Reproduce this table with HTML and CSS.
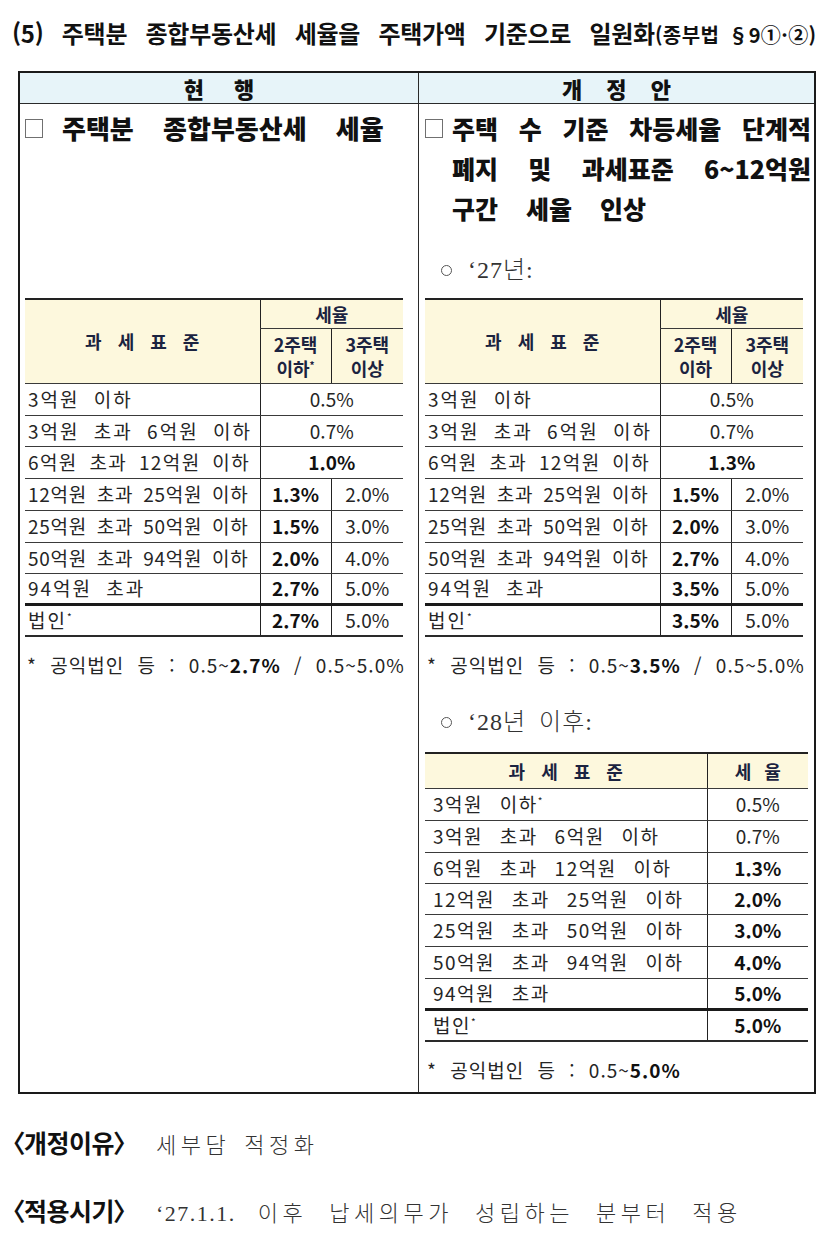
FILE: index.html
```html
<!DOCTYPE html>
<html lang="ko">
<head>
<meta charset="utf-8">
<title>주택분 종합부동산세 세율</title>
<link rel="stylesheet" href="styles.css">
</head>
<body>
<div class="page">
  <h1 class="title">(5) 주택분 종합부동산세 세율을 주택가액 기준으로 일원화<span class="title-ref">(종부법 §9①·②)</span></h1>

  <div class="cmp">
    <div class="cmp-head">
      <div class="hcell hcell-l">현 행</div>
      <div class="hcell hcell-r">개 정 안</div>
    </div>
    <div class="cmp-body">
      <div class="col col-l">
        <div class="intro">
          <div class="hd hd-l">
            <span class="cb"></span>
            <div class="hd-text"><span class="ln last">주택분 종합부동산세 세율</span></div>
          </div>
        </div>
        <table class="rt rt3">
          <colgroup><col class="c1"><col class="c2"><col class="c3"></colgroup>
          <tr class="h1"><th rowspan="2" class="spread">과 세 표 준</th><th colspan="2">세율</th></tr>
          <tr class="h2"><th>2주택<br>이하<sup>*</sup></th><th>3주택<br>이상</th></tr>
          <tr class="r32"><td class="lbl">3억원 이하</td><td colspan="2">0.5%</td></tr>
          <tr class="r31"><td class="lbl">3억원 초과 6억원 이하</td><td colspan="2">0.7%</td></tr>
          <tr class="r32"><td class="lbl mid">6억원 초과 12억원 이하</td><td colspan="2"><b>1.0%</b></td></tr>
          <tr class="r32"><td class="lbl tight">12억원 초과 25억원 이하</td><td><b>1.3%</b></td><td>2.0%</td></tr>
          <tr class="r32"><td class="lbl tight">25억원 초과 50억원 이하</td><td><b>1.5%</b></td><td>3.0%</td></tr>
          <tr class="r31"><td class="lbl tight">50억원 초과 94억원 이하</td><td><b>2.0%</b></td><td>4.0%</td></tr>
          <tr class="r31 before-corp"><td class="lbl">94억원 초과</td><td><b>2.7%</b></td><td>5.0%</td></tr>
          <tr class="r32 corp"><td class="lbl">법인<sup>*</sup></td><td><b>2.7%</b></td><td>5.0%</td></tr>
        </table>
        <p class="note">* 공익법인 등 : 0.5~<b>2.7%</b> / 0.5~5.0%</p>
      </div>

      <div class="col col-r">
        <div class="intro">
          <div class="hd hd-r">
            <span class="cb"></span>
            <div class="hd-text">
              <span class="ln">주택 수 기준 차등세율 단계적</span>
              <span class="ln">폐지 및 과세표준 6~12억원</span>
              <span class="ln last">구간 세율 인상</span>
            </div>
          </div>
          <p class="sub"><span class="bullet"></span>‘27년:</p>
        </div>
        <table class="rt rt3">
          <colgroup><col class="c1"><col class="c2"><col class="c3"></colgroup>
          <tr class="h1"><th rowspan="2" class="spread">과 세 표 준</th><th colspan="2">세율</th></tr>
          <tr class="h2"><th>2주택<br>이하</th><th>3주택<br>이상</th></tr>
          <tr class="r32"><td class="lbl">3억원 이하</td><td colspan="2">0.5%</td></tr>
          <tr class="r31"><td class="lbl">3억원 초과 6억원 이하</td><td colspan="2">0.7%</td></tr>
          <tr class="r32"><td class="lbl mid">6억원 초과 12억원 이하</td><td colspan="2"><b>1.3%</b></td></tr>
          <tr class="r32"><td class="lbl tight">12억원 초과 25억원 이하</td><td><b>1.5%</b></td><td>2.0%</td></tr>
          <tr class="r32"><td class="lbl tight">25억원 초과 50억원 이하</td><td><b>2.0%</b></td><td>3.0%</td></tr>
          <tr class="r31"><td class="lbl tight">50억원 초과 94억원 이하</td><td><b>2.7%</b></td><td>4.0%</td></tr>
          <tr class="r31 before-corp"><td class="lbl">94억원 초과</td><td><b>3.5%</b></td><td>5.0%</td></tr>
          <tr class="r32 corp"><td class="lbl">법인<sup>*</sup></td><td><b>3.5%</b></td><td>5.0%</td></tr>
        </table>
        <p class="note">* 공익법인 등 : 0.5~<b>3.5%</b> / 0.5~5.0%</p>

        <p class="sub sub2"><span class="bullet"></span>‘28년 이후:</p>
        <table class="rt rt2">
          <colgroup><col class="d1"><col class="d2"></colgroup>
          <tr class="h0"><th class="spread">과 세 표 준</th><th class="spread2">세 율</th></tr>
          <tr class="r32"><td class="lbl wide">3억원 이하<sup>*</sup></td><td>0.5%</td></tr>
          <tr class="r32"><td class="lbl wide">3억원 초과 6억원 이하</td><td>0.7%</td></tr>
          <tr class="r31"><td class="lbl wide">6억원 초과 12억원 이하</td><td><b>1.3%</b></td></tr>
          <tr class="r31"><td class="lbl wide">12억원 초과 25억원 이하</td><td><b>2.0%</b></td></tr>
          <tr class="r32"><td class="lbl wide">25억원 초과 50억원 이하</td><td><b>3.0%</b></td></tr>
          <tr class="r32"><td class="lbl wide">50억원 초과 94억원 이하</td><td><b>4.0%</b></td></tr>
          <tr class="r31 before-corp"><td class="lbl wide">94억원 초과</td><td><b>5.0%</b></td></tr>
          <tr class="r32 corp"><td class="lbl wide">법인<sup>*</sup></td><td><b>5.0%</b></td></tr>
        </table>
        <p class="note note2">* 공익법인 등 : 0.5~<b>5.0%</b></p>
      </div>
    </div>
  </div>

  <p class="foot"><span class="flabel">〈개정이유〉</span><span class="ftext">세부담 적정화</span></p>
  <p class="foot foot2"><span class="flabel">〈적용시기〉</span><span class="ftext"><span class="date">‘27.1.1.</span> 이후 납세의무가 성립하는 분부터 적용</span></p>
</div>
</body>
</html>
```

FILE: styles.css
```css
html, body {
  margin: 0;
  padding: 0;
  background: #ffffff;
}

body {
  font-family: "Noto Sans CJK KR", "Noto Sans", sans-serif;
  color: #151515;
  width: 827px;
}

.page {
  padding: 18px 0 0 0;
}

.title {
  margin: 0 0 23px 12px;
  height: 30px;
  line-height: 30px;
  font-size: 24px;
  font-weight: 700;
  letter-spacing: -0.3px;
  word-spacing: 12px;
  white-space: nowrap;
  color: #111;
}

.title-ref {
  font-size: 20px;
  font-weight: 700;
  word-spacing: 3px;
  letter-spacing: 0.4px;
}

/* outer comparison table */
.cmp {
  margin-left: 18px;
  width: 798px;
  box-sizing: border-box;
  border: 2px solid #1a1a1a;
}

.cmp-head {
  display: grid;
  grid-template-columns: 398px 1fr;
  height: 30px;
  background: #e7f4f9;
  border-bottom: 1px solid #2a2a2a;
}

.hcell {
  text-align: center;
  line-height: 30px;
  font-size: 22px;
  font-weight: 900;
  color: #111;
}

.hcell-l {
  letter-spacing: 12px;
  padding-left: 12px;
}

.hcell-r {
  border-left: 1px solid #2a2a2a;
  letter-spacing: 9px;
  padding-left: 9px;
}

.cmp-body {
  display: grid;
  grid-template-columns: 398px 1fr;
}

.col-l {
  padding: 0 0 0 5px;
}

.col-r {
  border-left: 1px solid #2a2a2a;
  padding: 0 0 7px 6px;
}

.intro {
  height: 190px;
}

.hd {
  display: flex;
  align-items: flex-start;
  margin-top: 4px;
}

.cb {
  flex: none;
  width: 16px;
  height: 17px;
  border: 1px solid #707070;
  margin-top: 11px;
  background: #fff;
}

.hd-l .cb { margin-right: 19px; }
.hd-r .cb { margin-right: 9px; }

.hd-text {
  font-size: 25px;
  font-weight: 900;
  line-height: 40px;
  color: #111;
}

.hd-l .hd-text {
  font-size: 26px;
}

.hd-l .ln.last {
  word-spacing: 22px;
}

.hd-r .hd-text {
  width: 359px;
}

.ln {
  display: block;
  text-align: justify;
  text-align-last: justify;
  white-space: nowrap;
}

.ln.last {
  text-align-last: left;
  word-spacing: 21px;
}

.sub {
  margin: 27px 0 0 0;
  height: 30px;
  line-height: 30px;
  font-family: "Liberation Serif", "Noto Sans CJK KR", serif;
  font-size: 24px;
  letter-spacing: 1px;
  word-spacing: 6px;
  color: #333;
  font-weight: 300;
}

.bullet {
  display: inline-block;
  width: 9px;
  height: 9px;
  border: 1.5px solid #555;
  border-radius: 50%;
  margin: 0 16px 3px 16px;
  vertical-align: middle;
}

.sub2 {
  margin-top: 27px;
  margin-bottom: 15px;
}

/* rate tables */
.rt {
  border-collapse: collapse;
  font-size: 19px;
  color: #252525;
  table-layout: fixed;
}

.rt3 { width: 378px; }
.rt2 { width: 383px; }

.rt .c1 { width: 235px; }
.rt .c2 { width: 71px; }
.rt .c3 { width: 72px; }
.rt .d1 { width: 282px; }
.rt .d2 { width: 101px; }

.rt tr:first-child {
  border-top: 2px solid #222;
}

.rt th,
.rt td {
  padding: 0;
  border-bottom: 1px solid #3a3a3a;
  text-align: center;
  line-height: 22px;
}

.rt th + th,
.rt td + td,
.rt tr.h2 th {
  border-left: 1px solid #222;
}

.rt th {
  background: #fdf8dd;
  font-weight: 700;
  font-size: 18px;
  color: #1b2340;
}

.rt tr.h1 { height: 29px; }
.rt tr.h2 { height: 55px; }
.rt tr.h0 { height: 35px; }
.rt tr.r32 { height: 32px; }
.rt tr.r31 { height: 31px; }

.rt tr.h2 th {
  line-height: 24px;
  vertical-align: middle;
}

.rt tr.before-corp td {
  border-bottom: 3px solid #1a1a1a;
}

.rt tr.corp td {
  border-bottom: 2px solid #2a2a2a;
}

.rt .spread {
  letter-spacing: 5px;
  word-spacing: 1px;
  padding-left: 5px;
}

.rt .spread2 {
  letter-spacing: 4px;
  padding-left: 4px;
}

.rt td.lbl {
  text-align: left;
  padding-left: 3px;
  white-space: nowrap;
  letter-spacing: 2px;
  word-spacing: 7px;
}

.rt td.mid {
  letter-spacing: 1.4px;
  word-spacing: 5px;
}

.rt td.tight {
  letter-spacing: 0.7px;
  word-spacing: 4px;
}

.rt td.wide {
  padding-left: 8px;
  word-spacing: 10px;
  letter-spacing: 1.5px;
}

.rt td b {
  font-weight: 700;
  color: #111;
}

.rt sup {
  font-size: 10px;
  vertical-align: 7px;
  line-height: 0;
  letter-spacing: 0;
}

.note {
  margin: 13px 0 0 2px;
  height: 30px;
  line-height: 30px;
  font-size: 19px;
  color: #252525;
  letter-spacing: 1px;
  word-spacing: 7px;
  white-space: nowrap;
}

.note b {
  font-weight: 700;
  color: #111;
}

.note2 {
  margin-top: 13px;
}

/* bottom lines */
.foot {
  margin: 31px 0 0 12px;
  height: 34px;
  line-height: 34px;
  white-space: nowrap;
}

.foot2 {
  margin-top: 34px;
}

.flabel {
  font-size: 25px;
  font-weight: 700;
  letter-spacing: -0.5px;
  color: #111;
  font-feature-settings: "palt" 1;
}

.ftext {
  margin-left: 30px;
  font-family: "Liberation Serif", "Noto Sans CJK KR", serif;
  font-size: 22px;
  font-weight: 300;
  color: #333;
  letter-spacing: 4.5px;
  word-spacing: 4px;
}

.foot2 .ftext {
  word-spacing: 12px;
}

.ftext .date {
  letter-spacing: 1.5px;
}
```
